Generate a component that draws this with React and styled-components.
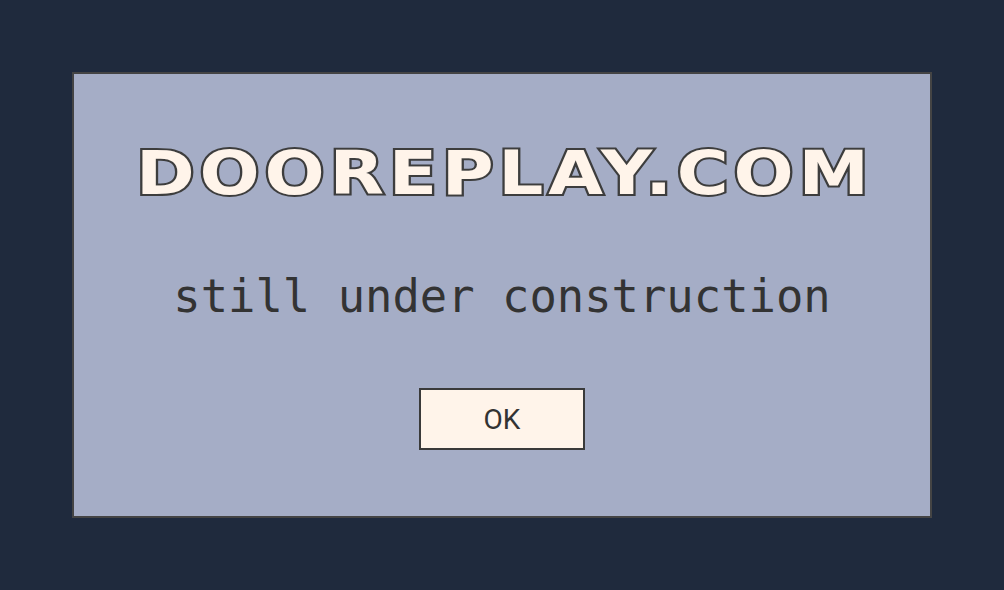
import React from 'react'
import styled, { createGlobalStyle } from 'styled-components'

const GlobalStyle = createGlobalStyle`
  html, body {
    margin: 0;
    padding: 0;
    background-color: #1f2a3d;
  }
  * {
    box-sizing: border-box;
  }
`

const App = () => {
  return (
    <>
      <GlobalStyle />
      <Page>
        <Panel>
          <Title>DOOREPLAY.COM</Title>
          <Subtitle>still under construction</Subtitle>
          <OkButton type='button'>OK</OkButton>
        </Panel>
      </Page>
    </>
  )
}

export default App

export const Page = styled.div`
  width: 100%;
  height: 100vh;
  padding: 72px;
`

export const Panel = styled.div`
  width: 100%;
  height: 100%;
  background-color: #a5adc6;
  border: 2px solid #444;
  display: flex;
  flex-direction: column;
  align-items: center;
  padding-top: 64px;
`

export const Title = styled.h1`
  margin: 0;
  padding-left: 4px;
  font-family: 'DejaVu Sans', sans-serif;
  font-weight: 700;
  font-size: 60px;
  line-height: 70px;
  letter-spacing: 4px;
  color: #fff4ea;
  -webkit-text-stroke: 4px #3d3d3d;
  paint-order: stroke fill;
  transform: scaleX(1.18);
`

export const Subtitle = styled.p`
  margin: 62px 0 0 0;
  font-family: 'DejaVu Sans Mono', monospace;
  font-size: 45.5px;
  line-height: 54px;
  color: #333;
`

export const OkButton = styled.button`
  margin-top: 64px;
  width: 166px;
  height: 62px;
  background-color: #fff4ea;
  border: 2px solid #3a3a3a;
  border-radius: 0;
  font-family: Roboto, sans-serif;
  font-size: 28px;
  color: #333;
  cursor: pointer;
`
